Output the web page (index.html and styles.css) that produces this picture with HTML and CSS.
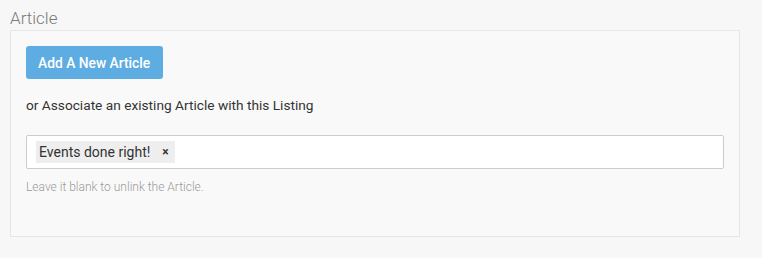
FILE: index.html
```html
<!DOCTYPE html>
<html>
<head>
<meta charset="utf-8">
<link rel="stylesheet" href="styles.css">
</head>
<body>
<div class="page">
  <h3 class="section-title">Article</h3>
  <div class="panel">
    <button class="btn-primary" type="button">Add A New Article</button>
    <p class="assoc">or Associate an existing Article with this Listing</p>
    <div class="select-box">
      <span class="tag">Events done right!<span class="tag-x">×</span></span>
    </div>
    <p class="help">Leave it blank to unlink the Article.</p>
  </div>
</div>
</body>
</html>
```
FILE: styles.css
```css
html, body {
  margin: 0;
  padding: 0;
  background: #f7f7f7;
  font-family: Roboto, "Liberation Sans", sans-serif;
}
.page {
  padding: 7px 22px 0 10px;
}
.section-title {
  margin: 0;
  font-size: 17px;
  font-weight: 300;
  color: #7a7a7a;
  line-height: 22px;
}
.panel {
  margin-top: 1px;
  background: #f9f9f9;
  border: 1px solid #e6e6e6;
  padding: 15px 15px 0 15px;
  box-sizing: border-box;
  height: 207px;
}
.btn-primary {
  display: block;
  background: #5dade2;
  border: none;
  border-radius: 3px;
  color: #fff;
  font-family: Roboto, "Liberation Sans", sans-serif;
  font-weight: 500;
  font-size: 13.8px;
  height: 33px;
  padding: 0 13px 0 12px;
  cursor: pointer;
}
.assoc {
  margin: 17px 0 0 0;
  font-size: 13.7px;
  color: #333;
  line-height: 18px;
}
.select-box {
  margin-top: 21px;
  background: #fff;
  border: 1px solid #ccc;
  border-radius: 2px;
  height: 34px;
  box-sizing: border-box;
  padding: 5px 9px;
  display: flex;
  align-items: center;
}
.tag {
  background: #eee;
  height: 22px;
  display: inline-flex;
  align-items: center;
  padding: 0 5px 0 3px;
  font-size: 14px;
  color: #333;
}
.tag-x {
  font-size: 12px;
  font-weight: 700;
  color: #333;
  margin-left: 12px;
  margin-right: 1px;
}
.help {
  margin: 11px 0 0 0;
  font-size: 12px;
  color: #999;
  font-weight: 300;
  line-height: 14px;
}
```
